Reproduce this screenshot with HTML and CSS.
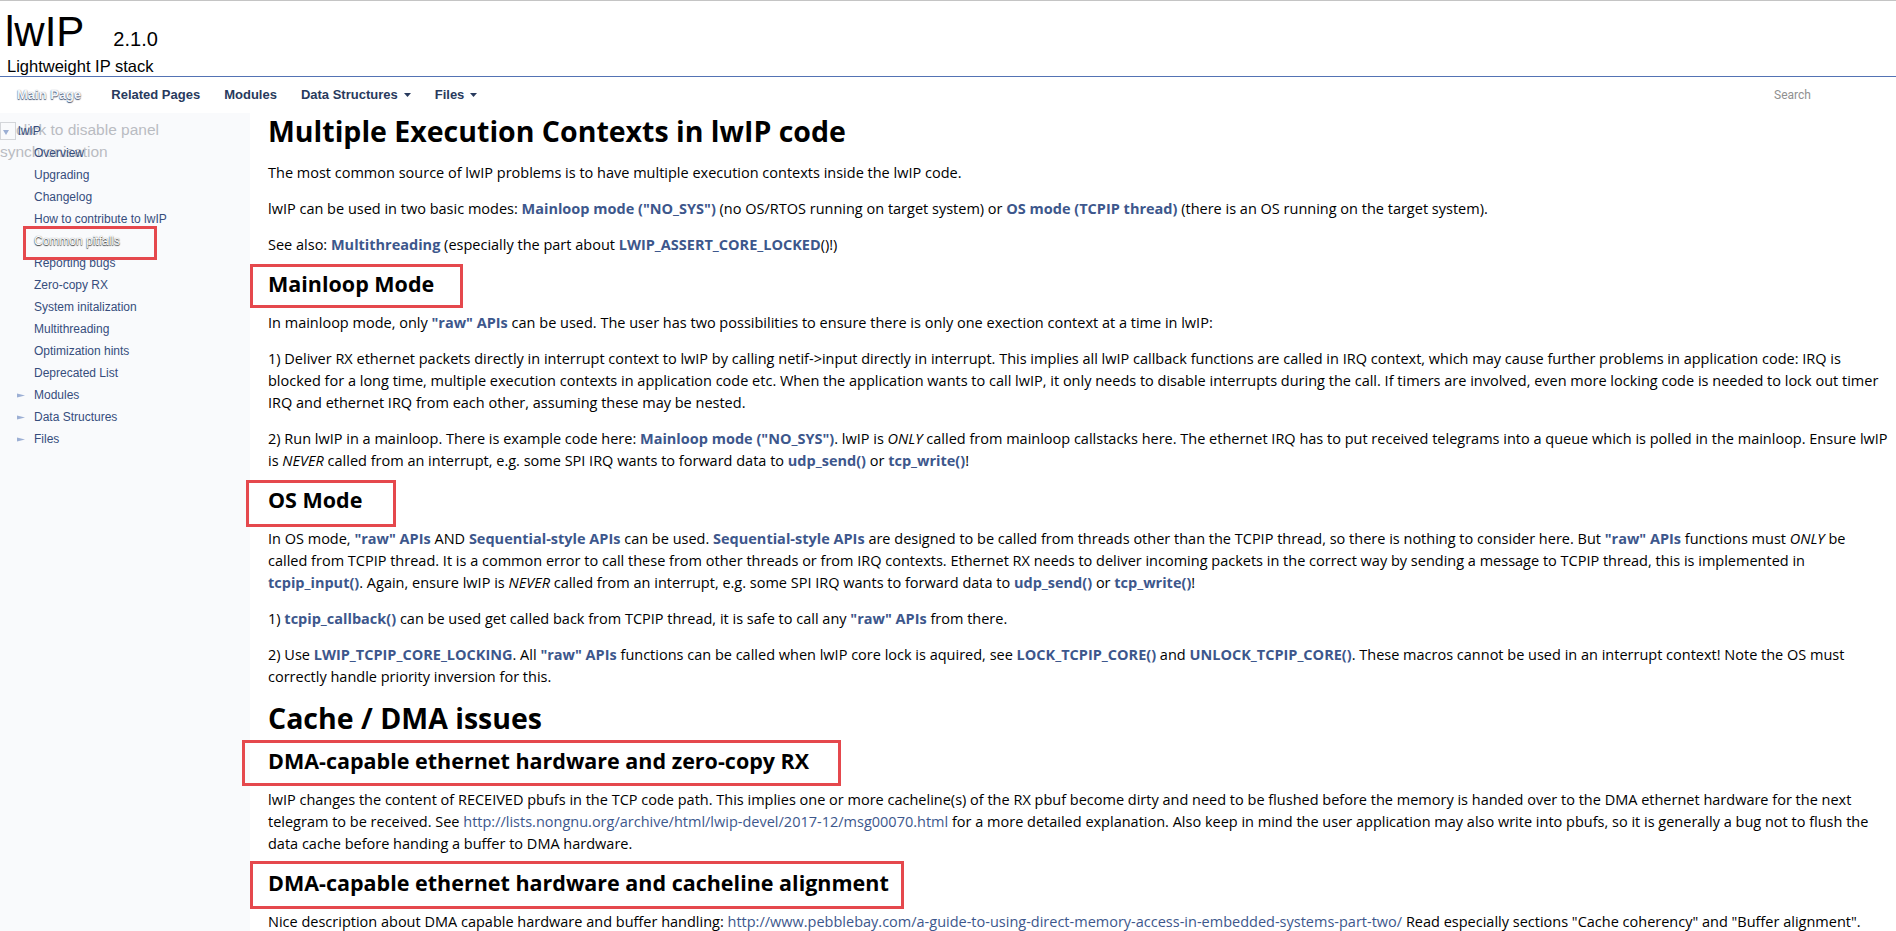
FILE: index.html
```html
<!DOCTYPE html>
<html lang="en">
<head>
<meta charset="utf-8">
<title>lwIP: Common pitfalls</title>
<link rel="stylesheet" href="styles.css">
</head>
<body>
<header class="titlearea">
  <div class="project">
    <span class="project-name">lwIP</span>
    <span class="project-number">2.1.0</span>
  </div>
  <div class="project-brief">Lightweight IP stack</div>
</header>
<nav class="main-nav">
  <ul class="tabs">
    <li><a class="current" href="#">Main Page</a></li>
    <li><a href="#">Related Pages</a></li>
    <li><a href="#">Modules</a></li>
    <li><a href="#">Data Structures<svg class="caret" width="7" height="4" viewBox="0 0 7 4"><path d="M0 0h7L3.5 4z"/></svg></a></li>
    <li><a href="#">Files<svg class="caret" width="7" height="4" viewBox="0 0 7 4"><path d="M0 0h7L3.5 4z"/></svg></a></li>
  </ul>
  <div class="search">Search</div>
</nav>
<div class="layout">
  <aside class="side-nav">
    <div class="sync"><span class="sync-box"></span>click to disable panel synchronisation</div>
    <ul class="tree">
      <li class="open"><svg class="arrow-down" width="6" height="5" viewBox="0 0 6 5"><path d="M0 0h6L3 5z"/></svg><a href="#">lwIP</a></li>
      <li class="leaf"><a href="#">Overview</a></li>
      <li class="leaf"><a href="#">Upgrading</a></li>
      <li class="leaf"><a href="#">Changelog</a></li>
      <li class="leaf"><a href="#">How to contribute to lwIP</a></li>
      <li class="leaf selected"><a href="#">Common pitfalls</a></li>
      <li class="leaf"><a href="#">Reporting bugs</a></li>
      <li class="leaf"><a href="#">Zero-copy RX</a></li>
      <li class="leaf"><a href="#">System initalization</a></li>
      <li class="leaf"><a href="#">Multithreading</a></li>
      <li class="leaf"><a href="#">Optimization hints</a></li>
      <li class="leaf"><a href="#">Deprecated List</a></li>
      <li class="closed"><svg class="arrow-right" width="8" height="5" viewBox="0 0 8 5"><path d="M0 0.5L8 2.5L0 4.5z"/></svg><a href="#">Modules</a></li>
      <li class="closed"><svg class="arrow-right" width="8" height="5" viewBox="0 0 8 5"><path d="M0 0.5L8 2.5L0 4.5z"/></svg><a href="#">Data Structures</a></li>
      <li class="closed"><svg class="arrow-right" width="8" height="5" viewBox="0 0 8 5"><path d="M0 0.5L8 2.5L0 4.5z"/></svg><a href="#">Files</a></li>
    </ul>
  </aside>
  <main class="contents">
    <h1>Multiple Execution Contexts in lwIP code</h1>
    <p>The most common source of lwIP problems is to have multiple execution contexts inside the lwIP code.</p>
    <p>lwIP can be used in two basic modes: <a href="#">Mainloop mode ("NO_SYS")</a> (no OS/RTOS running on target system) or <a href="#">OS mode (TCPIP thread)</a> (there is an OS running on the target system).</p>
    <p>See also: <a href="#">Multithreading</a> (especially the part about <a href="#">LWIP_ASSERT_CORE_LOCKED</a>()!)</p>

    <h2 class="mark mark-mainloop">Mainloop Mode</h2>
    <p>In mainloop mode, only <a href="#">"raw" APIs</a> can be used. The user has two possibilities to ensure there is only one exection context at a time in lwIP:</p>
    <p>1) Deliver RX ethernet packets directly in interrupt context to lwIP by calling netif-&gt;input directly in interrupt. This implies all lwIP callback functions are called in IRQ context, which may cause further problems in application code: IRQ is blocked for a long time, multiple execution contexts in application code etc. When the application wants to call lwIP, it only needs to disable interrupts during the call. If timers are involved, even more locking code is needed to lock out timer IRQ and ethernet IRQ from each other, assuming these may be nested.</p>
    <p>2) Run lwIP in a mainloop. There is example code here: <a href="#">Mainloop mode ("NO_SYS")</a>. lwIP is <em>ONLY</em> called from mainloop callstacks here. The ethernet IRQ has to put received telegrams into a queue which is polled in the mainloop. Ensure lwIP is <em>NEVER</em> called from an interrupt, e.g. some SPI IRQ wants to forward data to <a href="#">udp_send()</a> or <a href="#">tcp_write()</a>!</p>

    <h2 class="mark mark-os">OS Mode</h2>
    <p>In OS mode, <a href="#">"raw" APIs</a> AND <a href="#">Sequential-style APIs</a> can be used. <a href="#">Sequential-style APIs</a> are designed to be called from threads other than the TCPIP thread, so there is nothing to consider here. But <a href="#">"raw" APIs</a> functions must <em>ONLY</em> be called from TCPIP thread. It is a common error to call these from other threads or from IRQ contexts. Ethernet RX needs to deliver incoming packets in the correct way by sending a message to TCPIP thread, this is implemented in <a href="#">tcpip_input()</a>. Again, ensure lwIP is <em>NEVER</em> called from an interrupt, e.g. some SPI IRQ wants to forward data to <a href="#">udp_send()</a> or <a href="#">tcp_write()</a>!</p>
    <p>1) <a href="#">tcpip_callback()</a> can be used get called back from TCPIP thread, it is safe to call any <a href="#">"raw" APIs</a> from there.</p>
    <p>2) Use <a href="#">LWIP_TCPIP_CORE_LOCKING</a>. All <a href="#">"raw" APIs</a> functions can be called when lwIP core lock is aquired, see <a href="#">LOCK_TCPIP_CORE()</a> and <a href="#">UNLOCK_TCPIP_CORE()</a>. These macros cannot be used in an interrupt context! Note the OS must correctly handle priority inversion for this.</p>

    <h1>Cache / DMA issues</h1>
    <h2 class="mark mark-rx">DMA-capable ethernet hardware and zero-copy RX</h2>
    <p>lwIP changes the content of RECEIVED pbufs in the TCP code path. This implies one or more cacheline(s) of the RX pbuf become dirty and need to be flushed before the memory is handed over to the DMA ethernet hardware for the next telegram to be received. See <a class="url" href="#">http://lists.nongnu.org/archive/html/lwip-devel/2017-12/msg00070.html</a> for a more detailed explanation. Also keep in mind the user application may also write into pbufs, so it is generally a bug not to flush the data cache before handing a buffer to DMA hardware.</p>
    <h2 class="mark mark-align">DMA-capable ethernet hardware and cacheline alignment</h2>
    <p>Nice description about DMA capable hardware and buffer handling: <a class="url" href="#">http://www.pebblebay.com/a-guide-to-using-direct-memory-access-in-embedded-systems-part-two/</a> Read especially sections "Cache coherency" and "Buffer alignment".</p>
  </main>
</div>
</body>
</html>
```

FILE: styles.css
```css
* {
  box-sizing: border-box;
}

html,
body {
  margin: 0;
  padding: 0;
}

body {
  background: #ffffff;
  color: #000000;
  border-top: 1px solid #c4c4c4;
  font-family: "Open Sans", "Liberation Sans", sans-serif;
}

/* ---------- title area ---------- */
.titlearea {
  padding: 8px 0 0 5px;
  border-bottom: 1px solid #5373b4;
  font-family: "Liberation Sans", Arial, sans-serif;
  color: #000;
}

.project {
  display: flex;
  align-items: baseline;
  height: 46px;
  line-height: 46px;
}

.project-name {
  font-size: 42px;
}

.project-number {
  font-size: 20px;
  margin-left: 29px;
}

.project-brief {
  font-size: 16.5px;
  line-height: 19px;
  margin: 2px 0 0 2px;
}

/* ---------- main nav ---------- */
.main-nav {
  display: flex;
  align-items: center;
  height: 36px;
  font-family: "Liberation Sans", Arial, sans-serif;
}

.tabs {
  display: flex;
  list-style: none;
  margin: 0;
  padding: 0 0 0 5px;
}

.tabs a {
  display: flex;
  align-items: center;
  padding: 0 12px;
  line-height: 36px;
  font-size: 13px;
  font-weight: bold;
  color: #283a5d;
  text-decoration: none;
  text-shadow: 0 1px 1px rgba(255, 255, 255, 0.9);
}

.tabs a.current {
  color: #f4f6fa;
  text-shadow: 0 1px 1px rgba(40, 58, 93, 0.85), 0 0 1px rgba(40, 58, 93, 0.6);
  margin-right: 6px;
}

.caret {
  margin-left: 6px;
  fill: #283a5d;
}

.search {
  margin-left: auto;
  width: 122px;
  font-size: 12px;
  color: #909090;
  font-family: Roboto, "Liberation Sans", sans-serif;
}

/* ---------- layout ---------- */
.layout {
  display: flex;
  align-items: stretch;
}

/* ---------- side nav ---------- */
.side-nav {
  position: relative;
  flex: none;
  width: 250px;
  padding-top: 7px;
  background: #f9fafc;
  font-family: "Liberation Sans", Arial, sans-serif;
  font-size: 12px;
}

.sync {
  position: absolute;
  left: 0;
  top: 6px;
  width: 162px;
  font-size: 15.5px;
  line-height: 22px;
  color: #b9bcc2;
}

.sync-box {
  display: inline-block;
  width: 16px;
  height: 18px;
  vertical-align: -5px;
  border: 1px solid #d4d6da;
}

.tree {
  position: relative;
  list-style: none;
  margin: 0;
  padding: 0;
}

.tree li {
  display: flex;
  align-items: center;
  height: 22px;
}

.tree a {
  color: #364d7c;
  text-decoration: none;
}

.tree .open {
  padding-left: 3px;
}

.arrow-down {
  margin-right: 9px;
  margin-top: 3px;
  fill: #9cafd4;
}

.tree .leaf {
  padding-left: 34px;
}

.tree .closed {
  padding-left: 17px;
}

.arrow-right {
  margin-right: 9px;
  fill: #9cafd4;
}

.tree .selected {
  position: relative;
}

.tree .selected a {
  color: #ffffff;
  text-shadow: 0 1px 1px rgba(0, 0, 0, 0.75), 0 0 1px rgba(0, 0, 0, 0.5);
}

.tree .selected::after {
  content: "";
  position: absolute;
  left: 23px;
  top: -4px;
  width: 128px;
  height: 28px;
  border: 3px solid #e5484d;
}

/* ---------- contents ---------- */
.contents {
  flex: 1;
  min-width: 0;
  padding: 2px 8px 0 18px;
}

.contents h1 {
  margin: 0 0 15px;
  font-size: 28.5px;
  line-height: 32px;
  font-weight: bold;
}

.contents h2 {
  margin: 16px 0;
  font-size: 21.5px;
  line-height: 24px;
  font-weight: bold;
}

.contents h1 + h2 {
  margin-top: 0;
}

.contents p {
  margin: 0 0 14px;
  font-size: 14.5px;
  line-height: 22px;
}

.contents a {
  color: #3d578c;
  font-weight: bold;
  text-decoration: none;
}

.contents a.url {
  font-weight: normal;
}

/* red annotation boxes */
.mark {
  position: relative;
}

.mark::after {
  content: "";
  position: absolute;
  border: 3px solid #e5484d;
}

.mark-mainloop::after {
  left: -18px;
  top: -8px;
  width: 207px;
  height: 38px;
}

.mark-os::after {
  left: -22px;
  top: -8px;
  width: 144px;
  height: 41px;
}

.mark-rx::after {
  left: -26px;
  top: -9px;
  width: 593px;
  height: 40px;
}

.mark-align::after {
  left: -18px;
  top: -10px;
  width: 648px;
  height: 42px;
}
```
